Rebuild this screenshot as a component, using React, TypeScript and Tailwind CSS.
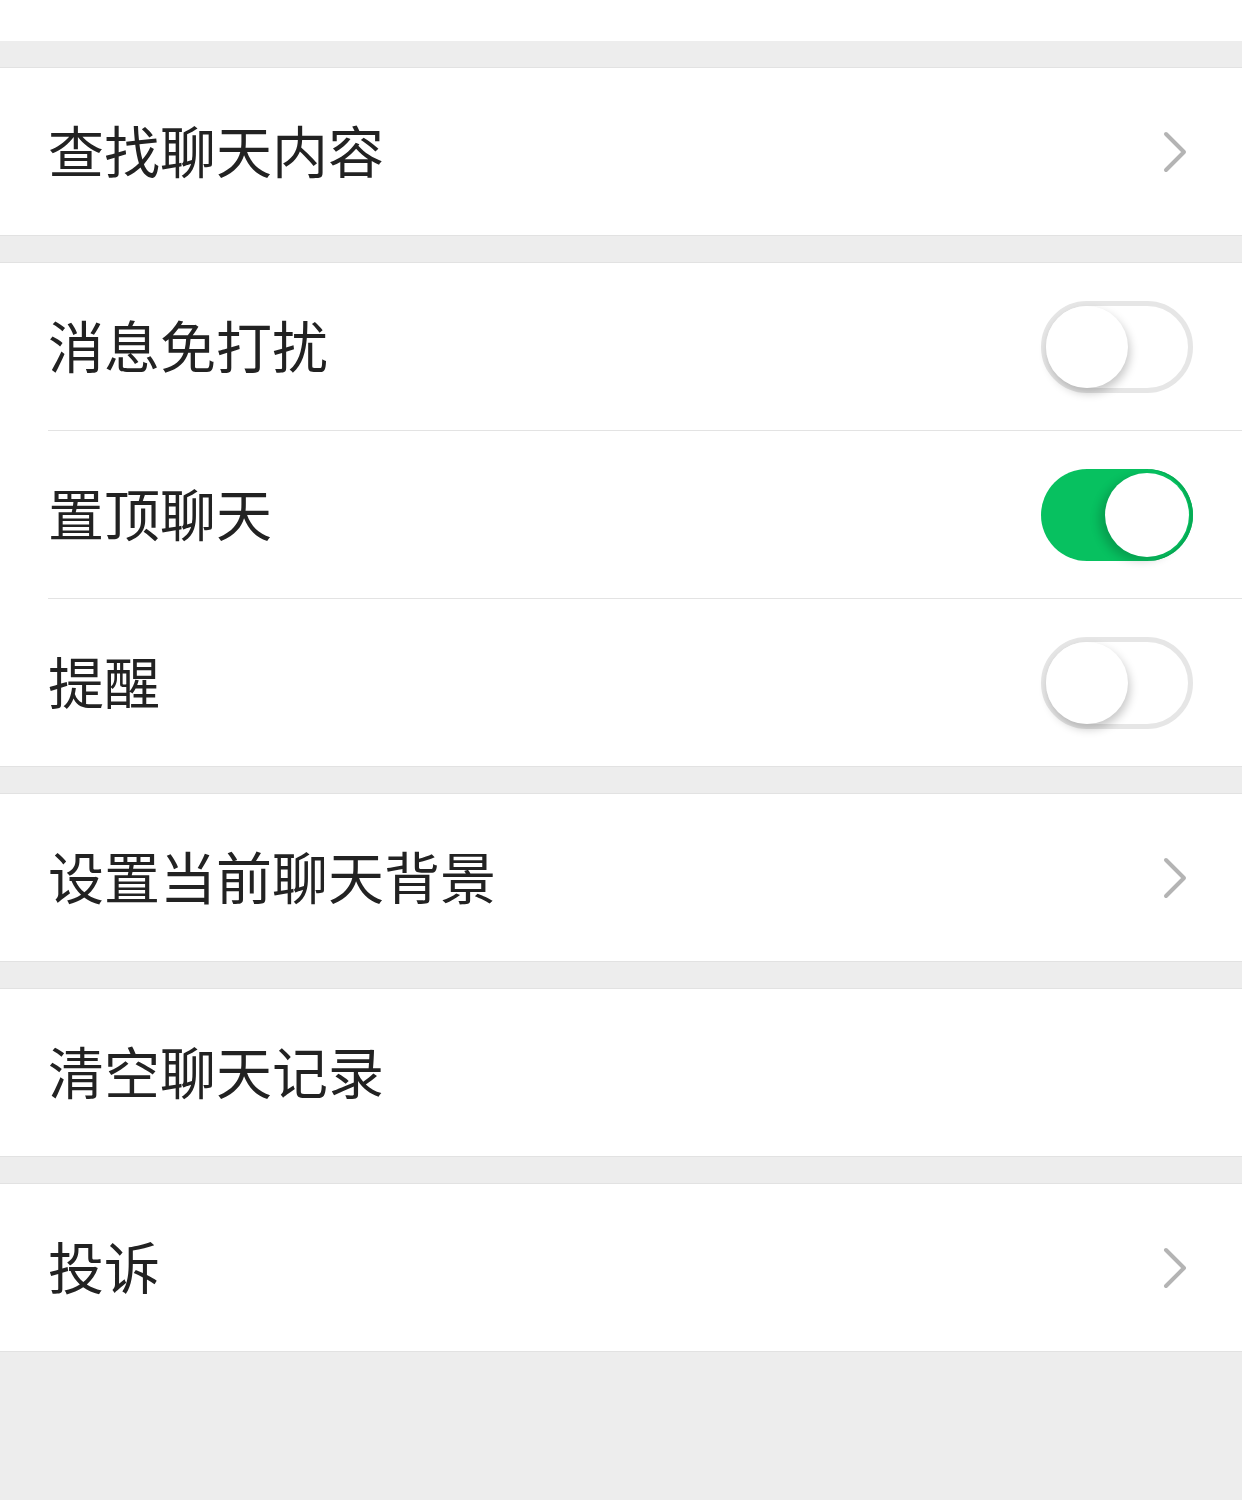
import React from 'react';

type Row =
  | { label: string; kind: 'link' }
  | { label: string; kind: 'plain' }
  | { label: string; kind: 'toggle'; on: boolean };

const groups: Row[][] = [
  [{ label: '查找聊天内容', kind: 'link' }],
  [
    { label: '消息免打扰', kind: 'toggle', on: false },
    { label: '置顶聊天', kind: 'toggle', on: true },
    { label: '提醒', kind: 'toggle', on: false },
  ],
  [{ label: '设置当前聊天背景', kind: 'link' }],
  [{ label: '清空聊天记录', kind: 'plain' }],
  [{ label: '投诉', kind: 'link' }],
];

function Chevron() {
  return (
    <svg width="26" height="44" viewBox="0 0 26 44" className="mr-[54px]">
      <polyline points="4,4 22,22 4,40" fill="none" stroke="#b4b4b4" strokeWidth="4" strokeLinecap="round" strokeLinejoin="round" />
    </svg>
  );
}

function Toggle({ on }: { on: boolean }) {
  if (on) {
    return (
      <div className="mr-[49px] flex h-[92px] w-[152px] items-center justify-end rounded-full bg-[#07c160] p-[4px] shadow-[inset_-3px_0_0_#06ad56]">
        <div className="h-[84px] w-[84px] rounded-full bg-white shadow-[-6px_4px_10px_rgba(0,0,0,0.18)]" />
      </div>
    );
  }
  return (
    <div className="mr-[49px] flex h-[92px] w-[152px] items-center justify-start rounded-full border-[5px] border-[#e6e6e6] bg-white">
      <div className="h-[82px] w-[82px] rounded-full bg-white shadow-[2px_5px_10px_rgba(0,0,0,0.22)]" />
    </div>
  );
}

export default function App() {
  return (
    <div className="min-h-[1500px] bg-[#ededed]" style={{ fontFamily: '"Noto Sans CJK SC", "Noto Sans", sans-serif' }}>
      <div className="h-[41px] bg-white" />
      {groups.map((rows, gi) => (
        <div key={gi} className="mt-[26px] border-y border-[#e2e2e2] bg-white">
          {rows.map((row, ri) => (
            <div key={ri}>
              {ri > 0 && <div className="ml-[48px] h-px bg-[#e3e3e3]" />}
              <div className="flex h-[167px] items-center justify-between pl-[48px]">
                <span className="pb-[6px] text-[56px] leading-none text-[#222222]">{row.label}</span>
                {row.kind === 'link' && <Chevron />}
                {row.kind === 'toggle' && <Toggle on={row.on} />}
              </div>
            </div>
          ))}
        </div>
      ))}
    </div>
  );
}
